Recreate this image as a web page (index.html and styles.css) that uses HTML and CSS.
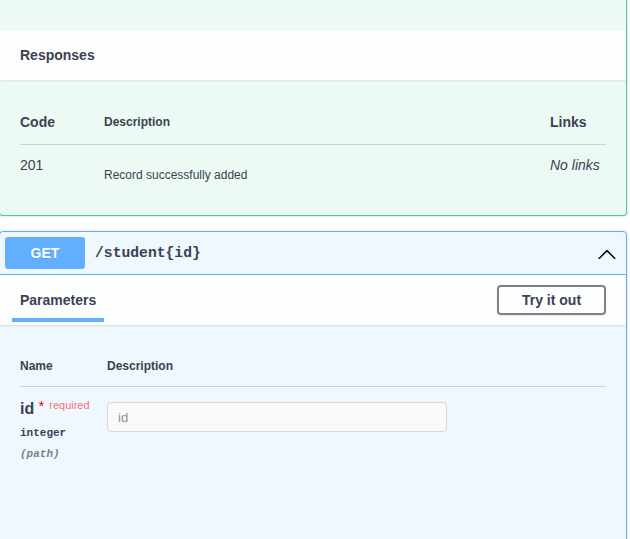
FILE: index.html
```html
<!DOCTYPE html>
<html>
<head>
<meta charset="utf-8">
<link rel="stylesheet" href="styles.css">
</head>
<body>
<div class="page">
  <div class="opblock post">
    <div class="spacer"></div>
    <div class="section-header">
      <h4 class="section-title">Responses</h4>
    </div>
    <div class="responses-inner">
      <div class="resp-head">
        <div class="c-code hd-big">Code</div>
        <div class="c-desc hd-small">Description</div>
        <div class="c-links hd-big">Links</div>
      </div>
      <div class="resp-row">
        <div class="c-code status">201</div>
        <div class="c-desc desc-text">Record successfully added</div>
        <div class="c-links no-links">No links</div>
      </div>
    </div>
  </div>

  <div class="opblock get">
    <div class="summary">
      <span class="method">GET</span>
      <span class="path">/student{id}</span>
      <svg class="arrow" width="20" height="20" viewBox="0 0 20 20">
        <path d="M17.418 6.109c.272-.268.709-.268.979 0s.271.701 0 .969l-7.908 7.83c-.27.268-.707.268-.979 0l-7.908-7.83c-.27-.268-.27-.701 0-.969.271-.268.709-.268.979 0L10 13.25l7.418-7.141z" transform="rotate(180 10 10.5)" fill="#000"/>
      </svg>
    </div>
    <div class="section-header params-header">
      <div class="tab">
        <h4 class="section-title">Parameters</h4>
        <div class="tab-bar"></div>
      </div>
      <button class="try-btn">Try it out</button>
    </div>
    <div class="params-inner">
      <div class="param-head">
        <div class="p-name hd-small">Name</div>
        <div class="p-desc hd-small">Description</div>
      </div>
      <div class="param-row">
        <div class="p-name">
          <div class="param-name">id<span class="star"> *</span><span class="req">required</span></div>
          <div class="param-type">integer</div>
          <div class="param-in">(path)</div>
        </div>
        <div class="p-desc">
          <input class="param-input" type="text" placeholder="id">
        </div>
      </div>
    </div>
  </div>
</div>
</body>
</html>
```

FILE: styles.css
```css
html, body {
  margin: 0;
  padding: 0;
  background: #fff;
  overflow: hidden;
}
body {
  font-family: "Liberation Sans", Arial, sans-serif;
  color: #3b4151;
}
.page {
  width: 628px;
  margin-left: -1px;
}
.opblock {
  border: 1px solid;
  border-radius: 4px;
  box-shadow: 0 0 3px rgba(0, 0, 0, 0.19);
}
.opblock.post {
  background: #edfaf4;
  border-color: #49cc90;
  border-top: 0;
  border-top-left-radius: 0;
  border-top-right-radius: 0;
}
.opblock.get {
  background: #eff7ff;
  border-color: #61affe;
  margin-top: 15px;
  height: 320px;
}
.spacer {
  height: 30px;
}
.section-header {
  height: 50px;
  box-sizing: border-box;
  padding: 0 20px;
  background: rgba(255, 255, 255, 0.8);
  box-shadow: 0 1px 2px rgba(0, 0, 0, 0.1);
  display: flex;
  align-items: center;
}
.section-title {
  margin: 0;
  font-size: 14px;
  font-weight: 700;
  line-height: 18px;
}
.responses-inner {
  padding: 22px 20px 23px;
}
.resp-head {
  display: flex;
  padding: 11px 0 13px;
  border-bottom: 1px solid rgba(59, 65, 81, 0.2);
  line-height: 18px;
}
.resp-row {
  display: flex;
  padding: 11px 0 10px;
  line-height: 18px;
}
.c-code { width: 84px; }
.c-desc { flex: 1; }
.c-links { width: 56px; }
.hd-big {
  font-size: 14px;
  font-weight: 700;
}
.hd-small {
  font-size: 12px;
  font-weight: 700;
}
.status {
  font-size: 14px;
}
.desc-text {
  font-size: 12px;
  line-height: 14px;
  margin-top: 12px;
  height: 14px;
}
.no-links {
  font-size: 14px;
  font-style: italic;
}

.summary {
  display: flex;
  align-items: center;
  padding: 5px;
  border-bottom: 1px solid #61affe;
}
.method {
  width: 80px;
  height: 32px;
  border-radius: 3px;
  background: #61affe;
  color: #fff;
  font-size: 14px;
  font-weight: 700;
  display: flex;
  align-items: center;
  justify-content: center;
  text-shadow: 0 1px 0 rgba(0, 0, 0, 0.1);
}
.path {
  margin-left: 10px;
  flex: 1;
  font-family: "Liberation Mono", "DejaVu Sans Mono", monospace;
  font-size: 14.7px;
  font-weight: 700;
}
.arrow {
  margin-right: 4px;
  margin-top: 2px;
}
.params-header {
  height: 50px;
  align-items: stretch;
  justify-content: space-between;
}
.tab {
  display: flex;
  flex-direction: column;
  padding-top: 16px;
}
.tab-bar {
  width: 92px;
  height: 4px;
  margin-left: -8px;
  margin-top: 9px;
  background: #61affe;
}
.try-btn {
  align-self: center;
  width: 109px;
  height: 30px;
  box-sizing: border-box;
  border: 2px solid #808080;
  border-radius: 4px;
  background: transparent;
  font-family: "Liberation Sans", Arial, sans-serif;
  font-size: 14px;
  font-weight: 700;
  color: #3b4151;
  padding: 0;
  box-shadow: 0 1px 2px rgba(0, 0, 0, 0.1);
}
.params-inner {
  padding: 22px 20px 20px;
}
.param-head {
  display: flex;
  padding: 12px 0;
  line-height: 15px;
  border-bottom: 1px solid rgba(59, 65, 81, 0.2);
}
.p-name { width: 87px; }
.p-desc { flex: 1; }
.param-row {
  display: flex;
  padding: 10px 0;
}
.param-name {
  font-size: 16px;
  font-weight: 700;
  line-height: 16px;
  white-space: nowrap;
}
.star {
  color: #f00;
  font-weight: 400;
  font-size: 15px;
  vertical-align: 3px;
}
.req {
  font-size: 11px;
  font-weight: 400;
  color: rgba(255, 0, 0, 0.6);
  vertical-align: 5px;
  padding-left: 5px;
}
.param-type {
  font-family: "Liberation Mono", "DejaVu Sans Mono", monospace;
  font-size: 11px;
  font-weight: 700;
  line-height: 14px;
  margin-top: 9px;
}
.param-in {
  font-family: "Liberation Mono", "DejaVu Sans Mono", monospace;
  font-size: 11px;
  font-style: italic;
  font-weight: 700;
  color: #808080;
  line-height: 14px;
  margin-top: 7px;
}
.param-input {
  display: block;
  margin-top: 5px;
  width: 340px;
  height: 30px;
  box-sizing: border-box;
  border: 1px solid #d9d9d9;
  border-radius: 4px;
  background: #fafafa;
  padding: 0 10px;
  font-family: "Liberation Sans", Arial, sans-serif;
  font-size: 13px;
  color: #3b4151;
  outline: none;
}
.param-input::placeholder {
  color: #8a8f99;
}
```
